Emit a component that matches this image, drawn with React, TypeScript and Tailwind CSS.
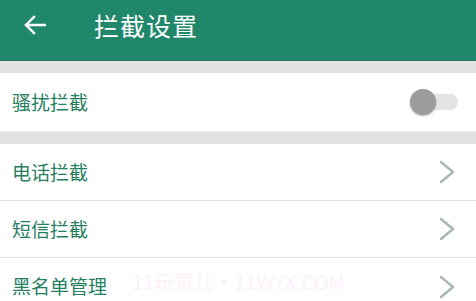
import React from "react";

const font = { fontFamily: '"Noto Sans CJK SC", "Noto Sans", sans-serif' };

function Chevron() {
  return (
    <svg width="16" height="24" viewBox="0 0 16 24" fill="none">
      <path d="M2 2 L14 12 L2 22" stroke="#a6b8b0" strokeWidth="2.4" strokeLinecap="round" strokeLinejoin="round" />
    </svg>
  );
}

function Row({ label, last }: { label: string; last?: boolean }) {
  return (
    <div className={`flex items-center justify-between bg-white pl-3 pr-[21px] h-[57px] ${last ? "" : "border-b border-[#e2e2e2]"}`}>
      <span className="text-[19px] text-[#26805f]">{label}</span>
      <Chevron />
    </div>
  );
}

export default function App() {
  return (
    <div className="relative w-[476px] h-[301px] overflow-hidden bg-[#e2e2e2]" style={font}>
      <div className="flex items-center h-[61px] pb-[10px] bg-[#21876a] border-b border-[#1a7a5c]">
        <svg className="ml-[24px]" width="22" height="20" viewBox="0 0 22 20" fill="none">
          <path d="M21 10 H2 M10 2 L2 10 L10 18" stroke="white" strokeWidth="2.4" strokeLinecap="square" />
        </svg>
        <span className="ml-[48px] text-[25px] text-white tracking-[1px] leading-none">拦截设置</span>
      </div>
      <div className="h-[12px]" />
      <div className="flex items-center justify-between bg-white pl-3 pr-[18px] h-[59px] border-b border-[#ececec]">
        <span className="text-[19px] text-[#26805f]">骚扰拦截</span>
        <div className="relative w-[48px] h-[26px] flex items-center">
          <div className="absolute left-[3px] right-0 h-[16px] rounded-full bg-[#e3e3e3]" />
          <div className="absolute left-0 w-[26px] h-[26px] rounded-full bg-[#9c9c9c] shadow-[0_1px_2px_rgba(0,0,0,0.3)]" />
        </div>
      </div>
      <div className="h-[12px]" />
      <Row label="电话拦截" />
      <Row label="短信拦截" />
      <Row label="黑名单管理" last />
      <div className="absolute left-[132px] top-[267px] text-[20px] text-[#fdf0fa] whitespace-nowrap">
        11玩意儿・11WYX.COM
      </div>
    </div>
  );
}
